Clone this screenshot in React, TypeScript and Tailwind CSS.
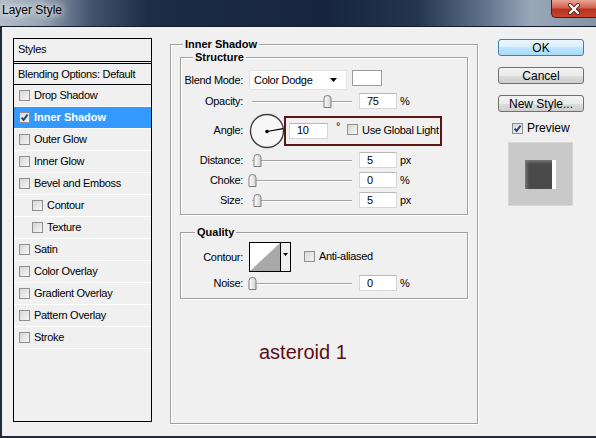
import React from "react"

type StyleItem = { name: string; checked?: boolean; selected?: boolean; indent?: boolean }

const styleItems: StyleItem[] = [
  { name: "Drop Shadow" },
  { name: "Inner Shadow", checked: true, selected: true },
  { name: "Outer Glow" },
  { name: "Inner Glow" },
  { name: "Bevel and Emboss" },
  { name: "Contour", indent: true },
  { name: "Texture", indent: true },
  { name: "Satin" },
  { name: "Color Overlay" },
  { name: "Gradient Overlay" },
  { name: "Pattern Overlay" },
  { name: "Stroke" },
]

function Check({ checked = false }: { checked?: boolean }) {
  return (
    <span className="relative inline-block w-[11px] h-[11px] shrink-0 border border-[#8e8f8f] bg-[linear-gradient(135deg,#d6d6d6_0%,#f6f6f6_100%)]">
      {checked && (
        <svg viewBox="0 0 11 11" className="absolute -left-px -top-px w-[11px] h-[11px]">
          <path d="M2.6 5.6 L4.6 7.9 L8.6 2.6" fill="none" stroke="#253f8f" strokeWidth="1.9" />
        </svg>
      )}
    </span>
  )
}

function Thumb() {
  return (
    <svg width="9" height="13" viewBox="0 0 9 13">
      <defs>
        <linearGradient id="tg" x1="0" y1="0" x2="1" y2="0">
          <stop offset="0" stopColor="#ffffff" />
          <stop offset="1" stopColor="#d2d2d2" />
        </linearGradient>
      </defs>
      <path d="M1 3.5 Q1 0.5 4.5 0.5 Q8 0.5 8 3.5 L8 12.5 L1 12.5 Z" fill="url(#tg)" stroke="#7c7c7c" />
    </svg>
  )
}

function Slider({ value }: { value: number }) {
  return (
    <div className="relative w-[108px] h-[16px] ml-[5px] shrink-0">
      <div className="absolute left-[4px] right-[4px] top-[8px] h-[2px] border-t border-[#a3a3a3] border-b border-b-white" />
      <div className="absolute top-[2px] leading-none" style={{ left: value }}>
        <Thumb />
      </div>
    </div>
  )
}

function NumBox({ value, w = 38 }: { value: string; w?: number }) {
  return (
    <div
      className="h-[16px] bg-white border border-[#d6d6d6] border-t-[#b9b9b9] pl-[7px] flex items-center shrink-0"
      style={{ width: w }}
    >
      {value}
    </div>
  )
}

function Label({ children }: { children: React.ReactNode }) {
  return <span className="w-[62px] text-right shrink-0">{children}</span>
}

function SliderRow({ label, value, pos, unit }: { label: string; value: string; pos: number; unit: string }) {
  return (
    <div className="h-[20px] flex items-center">
      <Label>{label}</Label>
      <Slider value={pos} />
      <span className="ml-[3px]">
        <NumBox value={value} />
      </span>
      <span className="ml-[3px]">{unit}</span>
    </div>
  )
}

function GroupTitle({ children, left }: { children: React.ReactNode; left: string }) {
  return (
    <span className={`absolute -top-[8px] px-[2px] bg-[#f0f0f0] font-bold tracking-normal leading-[14px] ${left}`}>
      {children}
    </span>
  )
}

function StylesPanel() {
  return (
    <div className="ml-[11px] mt-[11px] w-[139px] h-[384px] border border-black flex flex-col shrink-0">
      <div className="h-[25px] pl-[4px] pb-[2px] flex items-center border-b-[3px] border-double border-black">Styles</div>
      <div className="h-[21px] pl-[4px] flex items-center border-b border-black">Blending Options: Default</div>
      {styleItems.map((s) => (
        <div
          key={s.name}
          className={`h-[22px] flex items-center gap-[4px] border-b border-white ${s.indent ? "pl-[18px]" : "pl-[5px]"} ${
            s.selected ? "bg-[#3399ff] text-white font-bold tracking-normal" : ""
          }`}
        >
          <Check checked={s.checked} />
          <span>{s.name}</span>
        </div>
      ))}
    </div>
  )
}

function Main() {
  return (
    <div className="relative ml-[18px] mt-[17px] w-[308px] h-[380px] shrink-0 border border-[#a0a0a0] shadow-[inset_1px_1px_0_#fff,1px_1px_0_#fff] px-[9px] pt-[12px]">
      <GroupTitle left="left-[12px]">Inner Shadow</GroupTitle>

      {/* Structure */}
      <div className="relative h-[158px] border border-[#a0a0a0] shadow-[inset_1px_1px_0_#fff,1px_1px_0_#fff]">
        <GroupTitle left="left-[12px]">Structure</GroupTitle>

        <div className="mt-[11px] h-[22px] flex items-center">
          <Label>Blend Mode:</Label>
          <div className="ml-[6px] w-[98px] h-[20px] bg-white border border-[#e2e2e2] flex items-center justify-between pl-[4px] pr-[9px]">
            <span>Color Dodge</span>
            <svg width="7" height="4" viewBox="0 0 7 4">
              <path d="M0 0 H7 L3.5 4 Z" fill="#000" />
            </svg>
          </div>
          <div className="ml-[5px] w-[30px] h-[16px] bg-white border border-[#9c9c9c] -mt-[4px]" />
        </div>

        <SliderRow label="Opacity:" value="75" pos={75} unit="%" />

        <div className="h-[39px] flex items-center">
          <Label>Angle:</Label>
          <svg width="36" height="36" viewBox="0 0 36 36" className="ml-[6px] shrink-0">
            <circle cx="18" cy="18" r="16.5" fill="#f7f7f7" stroke="#3e3e3e" strokeWidth="1.4" />
            <line x1="18" y1="18.5" x2="34" y2="15.6" stroke="#000" strokeWidth="1.1" />
            <circle cx="18" cy="18.5" r="1.8" fill="#000" />
          </svg>
          <div className="-ml-[1px] w-[158px] h-[30px] border-2 border-[#5a1515] flex items-center pl-[3px] shrink-0">
            <NumBox value="10" w={39} />
            <span className="ml-[8px] -mt-[8px]">°</span>
            <span className="ml-[7px]">
              <Check />
            </span>
            <span className="ml-[4px]">Use Global Light</span>
          </div>
        </div>

        <SliderRow label="Distance:" value="5" pos={5} unit="px" />
        <SliderRow label="Choke:" value="0" pos={0} unit="%" />
        <SliderRow label="Size:" value="5" pos={5} unit="px" />
      </div>

      {/* Quality */}
      <div className="relative mt-[17px] h-[67px] border border-[#a0a0a0] shadow-[inset_1px_1px_0_#fff,1px_1px_0_#fff]">
        <GroupTitle left="left-[14px]">Quality</GroupTitle>

        <div className="mt-[9px] h-[30px] flex items-center">
          <Label>Contour:</Label>
          <div className="ml-[6px] w-[42px] h-[30px] border border-black flex shrink-0">
            <svg width="30" height="28" viewBox="0 0 30 28" className="bg-white">
              <path d="M0 28 L30 0 L30 28 Z" fill="#a9a9a9" />
            </svg>
            <div className="flex-1 border-l border-black flex justify-center pt-[10px]">
              <svg width="5" height="3" viewBox="0 0 5 3">
                <path d="M0 0 H5 L2.5 3 Z" fill="#000" />
              </svg>
            </div>
          </div>
          <span className="ml-[13px] -mt-[2px] flex items-center gap-[4px]">
            <Check />
            <span>Anti-aliased</span>
          </span>
        </div>

        <div className="mt-[1px]">
          <SliderRow label="Noise:" value="0" pos={0} unit="%" />
        </div>
      </div>

      <div className="mt-[42px] pl-[79px] text-[20px] leading-[23px] tracking-normal text-[#5b1010]">asteroid 1</div>
    </div>
  )
}

function Side() {
  const btn = "h-[17px] w-full rounded-[3px] border text-[12px] leading-none tracking-normal flex items-center justify-center"
  return (
    <div className="ml-[20px] mt-[12px] w-[86px] flex flex-col shrink-0">
      <button className={`${btn} border-[#3c7fb1] bg-[linear-gradient(180deg,#eaf6fd_0%,#d9f0fc_50%,#bee6fd_50%,#a9dbf6_100%)]`}>OK</button>
      <button className={`${btn} mt-[11px] border-[#707070] bg-[linear-gradient(180deg,#f2f2f2_0%,#ebebeb_50%,#dddddd_50%,#cfcfcf_100%)]`}>Cancel</button>
      <button className={`${btn} mt-[11px] border-[#707070] bg-[linear-gradient(180deg,#f2f2f2_0%,#ebebeb_50%,#dddddd_50%,#cfcfcf_100%)]`}>New Style...</button>
      <div className="mt-[8px] h-[16px] pl-[14px] flex items-center gap-[4px] text-[12px] tracking-normal">
        <Check checked />
        <span>Preview</span>
      </div>
      <div className="ml-[10px] mt-[6px] w-[65px] h-[64px] bg-[#c9c9c9] border border-[#d6d6d6] pl-[16px] pt-[17px] flex items-start">
        <div className="w-[27px] h-[29px] bg-[#4a4a4a] shadow-[inset_2px_2px_3px_rgba(160,160,160,0.55)]" />
        <div className="w-[4px] h-[29px] bg-white" />
      </div>
    </div>
  )
}

function TitleBar() {
  return (
    <div className="h-[27px] shrink-0 flex items-start border-b border-[#131a28] bg-[linear-gradient(90deg,#b3bdc9_0%,#97a4b4_7%,#44556f_15%,#1d2c47_25%,#17253e_55%,#24354f_70%,#5e708a_81%,#99a7b8_89%,#8393a8_100%)]">
      <span className="pl-[2px] pt-[3px] text-[12px] leading-[14px] [text-shadow:0_0_6px_#fff,0_0_10px_#fff]">Layer Style</span>
      <div className="ml-auto w-[45px] h-[18px] rounded-bl-[5px] border border-t-0 border-r-0 border-[#4a1a14] bg-[linear-gradient(180deg,#e9a594_0%,#d4644f_45%,#b8321f_55%,#c8452f_100%)] flex items-center justify-center">
        <svg width="14" height="12" viewBox="0 0 14 12">
          <path d="M3 2 L11 10 M11 2 L3 10" stroke="#5a1a10" strokeWidth="4" strokeLinecap="round" />
          <path d="M3 2 L11 10 M11 2 L3 10" stroke="#ffffff" strokeWidth="2.4" strokeLinecap="round" />
        </svg>
      </div>
    </div>
  )
}

export default function App() {
  return (
    <div className="w-[596px] h-[438px] overflow-hidden flex flex-col bg-[#222b3b] font-['Liberation_Sans',Arial,sans-serif] text-black">
      <TitleBar />
      <div className="flex-1 ml-[2px] mb-[2px] bg-[#f0f0f0] flex items-start text-[11px] leading-[13px] tracking-[-0.3px]">
        <StylesPanel />
        <Main />
        <Side />
      </div>
    </div>
  )
}
